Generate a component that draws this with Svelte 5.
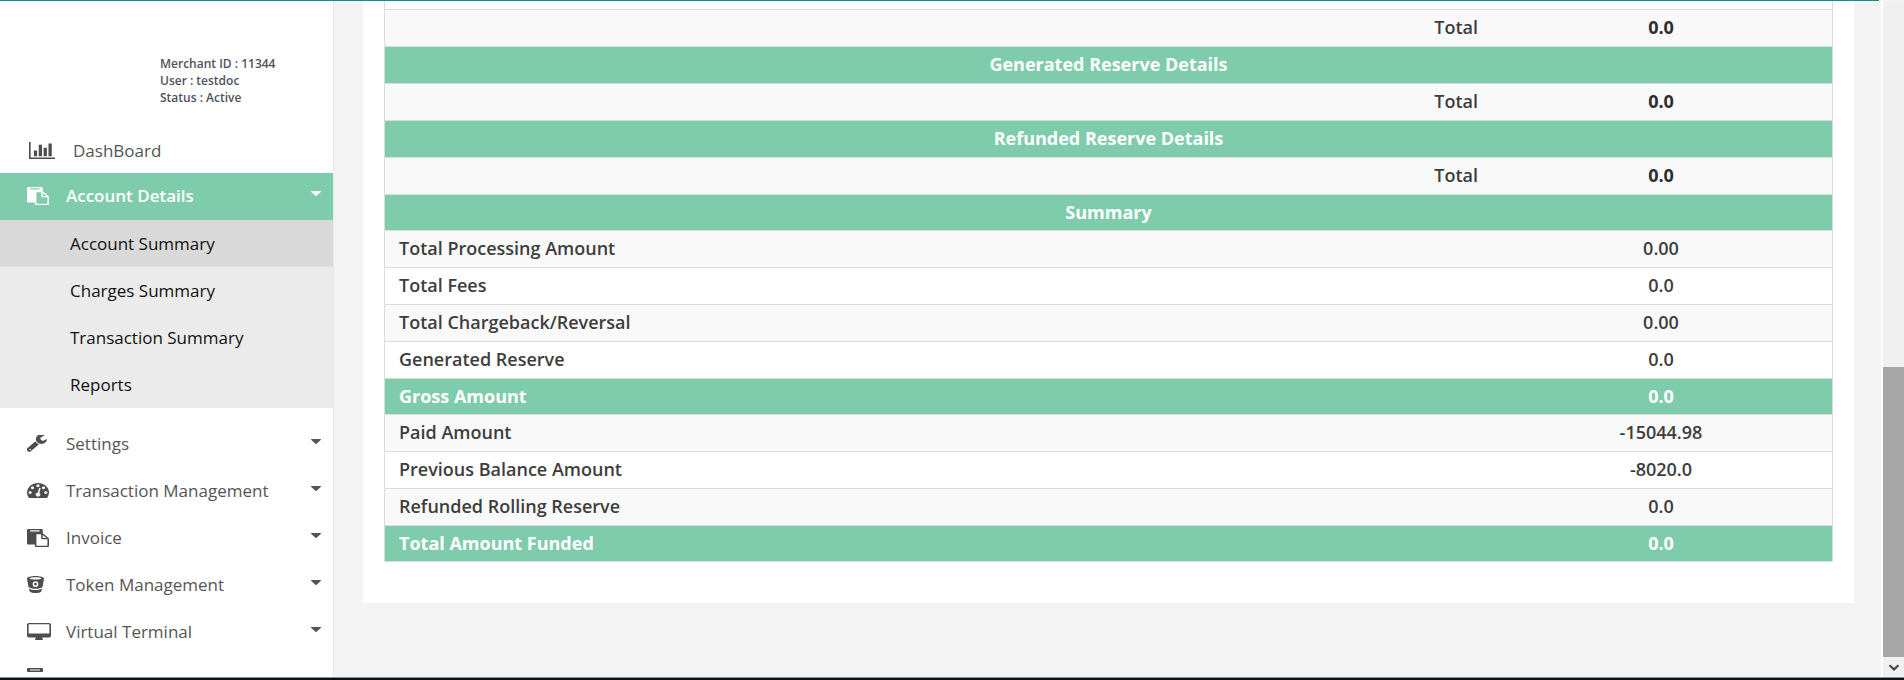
<script>
  const sections = ['Generated Reserve Details', 'Refunded Reserve Details'];

  const summary = [
    { label: 'Total Processing Amount', value: '0.00' },
    { label: 'Total Fees', value: '0.0' },
    { label: 'Total Chargeback/Reversal', value: '0.00' },
    { label: 'Generated Reserve', value: '0.0' },
    { label: 'Gross Amount', value: '0.0', accent: true },
    { label: 'Paid Amount', value: '-15044.98' },
    { label: 'Previous Balance Amount', value: '-8020.0' },
    { label: 'Refunded Rolling Reserve', value: '0.0' },
    { label: 'Total Amount Funded', value: '0.0', accent: true }
  ];

  const subItems = ['Account Summary', 'Charges Summary', 'Transaction Summary', 'Reports'];

  const menu = [
    { label: 'Settings', icon: 'wrench' },
    { label: 'Transaction Management', icon: 'gauge' },
    { label: 'Invoice', icon: 'paste' },
    { label: 'Token Management', icon: 'bucket' },
    { label: 'Virtual Terminal', icon: 'desktop' }
  ];

  const icons = {
    chart: {
      w: 26, h: 17, box: '0 128 2048 1536',
      d: 'M640 896v512h-256v-512h256zM1024 384v1024h-256v-1024h256zM2048 1536v128h-2048v-1536h128v1408h1920zM1408 640v768h-256v-768h256zM1792 256v1152h-256v-1152h256z'
    },
    paste: {
      w: 22, h: 18, box: '0 0 1792 1792',
      d: 'M768 1664h896v-640h-416q-40 0-68-28t-28-68v-416h-384v1152zM1024 224v-64q0-13-9.5-22.5t-22.5-9.5h-704q-13 0-22.5 9.5t-9.5 22.5v64q0 13 9.5 22.5t22.5 9.5h704q13 0 22.5-9.5t9.5-22.5zM1280 896h299l-299-299v299zM1792 1024v672q0 40-28 68t-68 28h-960q-40 0-68-28t-28-68v-160h-544q-40 0-68-28t-28-68v-1344q0-40 28-68t68-28h1088q40 0 68 28t28 68v328q21 13 36 28l408 408q28 28 48 76t20 88z'
    },
    wrench: {
      w: 20, h: 17, box: '128 128 1600 1580',
      d: 'M448 1472q0-26-19-45t-45-19-45 19-19 45 19 45 45 19 45-19 19-45zM1092 988l-682 682q-37 37-90 37-52 0-91-37l-106-108q-38-36-38-90 0-53 38-91l681-681q39 98 114.5 173.5t173.5 114.5zM1726 553q0 39-23 106-47 134-164.5 217.5t-258.5 83.5q-185 0-316.5-131.5t-131.5-316.5 131.5-316.5 316.5-131.5q58 0 121.5 16.5t107.5 46.5q16 11 16 28t-16 28l-293 169v224l193 107q5-3 79-48.5t135.5-81 70.5-35.5q15 0 23.5 10t8.5 25z'
    },
    gauge: {
      w: 22, h: 15, box: '0 256 1792 1408',
      d: 'M384 1152q0-53-37.5-90.5t-90.5-37.5-90.5 37.5-37.5 90.5 37.5 90.5 90.5 37.5 90.5-37.5 37.5-90.5zM576 704q0-53-37.5-90.5t-90.5-37.5-90.5 37.5-37.5 90.5 37.5 90.5 90.5 37.5 90.5-37.5 37.5-90.5zM1004 1185l101-382q6-26-7.5-48.5t-38.5-29.5-48 6.5-30 39.5l-101 382q-60 5-107 43.5t-63 98.5q-20 77 20 146t117 89 146-20 89-117q16-60-6-117t-72-91zM1664 1152q0-53-37.5-90.5t-90.5-37.5-90.5 37.5-37.5 90.5 37.5 90.5 90.5 37.5 90.5-37.5 37.5-90.5zM1024 512q0-53-37.5-90.5t-90.5-37.5-90.5 37.5-37.5 90.5 37.5 90.5 90.5 37.5 90.5-37.5 37.5-90.5zM1472 704q0-53-37.5-90.5t-90.5-37.5-90.5 37.5-37.5 90.5 37.5 90.5 90.5 37.5 90.5-37.5 37.5-90.5zM1792 1152q0 261-141 483-19 29-54 29h-1402q-35 0-54-29-141-221-141-483 0-182 71-348t191-286 286-191 348-71 348 71 286 191 191 286 71 348z'
    },
    bucket: {
      w: 17, h: 17, box: '0 0 17 17',
      d: 'M8.500 0C13 0 17 1 17 2.600L15.600 10.800C14 12.300 11.500 12.800 8.500 12.800S3 12.300 1.400 10.800L0 2.600C0 1 4 0 8.500 0zM8.500 1.300C5.500 1.300 3 1.700 2.300 2.400C3 3 5.500 3.400 8.500 3.400S14 3 14.700 2.400C14 1.700 11.500 1.300 8.500 1.300zM8.500 5.200A2.900 2.900 0 1 0 8.500 11A2.900 2.900 0 1 0 8.500 5.200zM8.500 6.700A1.400 1.400 0 1 1 8.500 9.500A1.400 1.400 0 1 1 8.500 6.700zM2 12.500C4 13.700 6 14 8.500 14S13 13.700 15 12.500L14.300 15.500C13 16.600 11 17 8.500 17S4 16.600 2.700 15.500z'
    },
    desktop: {
      w: 24, h: 17, box: '0 0 1920 1664',
      d: 'M1792 992v-832q0-13-9.500-22.500t-22.500-9.500h-1600q-13 0-22.500 9.500t-9.500 22.500v832q0 13 9.500 22.500t22.500 9.500h1600q13 0 22.500-9.500t9.500-22.500zM1920 160v1088q0 66-47 113t-113 47h-544q0 37 16 77.500t32 71 16 43.500q0 26-19 45t-45 19h-512q-26 0-45-19t-19-45q0-14 16-44t32-70 16-78h-544q-66 0-113-47t-47-113v-1088q0-66 47-113t113-47h1600q66 0 113 47t47 113z'
    },
    drawer: {
      w: 16, h: 22, box: '0 0 16 22',
      d: 'M1 0H15Q16 0 16 1V3Q16 4 15 4H1Q0 4 0 3V1Q0 0 1 0zM3 1.500V2.500H13V1.500zM1 11H15Q16 11 16 12V21Q16 22 15 22H1Q0 22 0 21V12Q0 11 1 11z'
    }
  };
</script>

{#snippet glyph(name)}
  {@const i = icons[name]}
  <svg width={i.w} height={i.h} viewBox={i.box} preserveAspectRatio="none" aria-hidden="true">
    <path fill="currentColor" fill-rule="evenodd" d={i.d} />
  </svg>
{/snippet}

{#snippet caret()}
  <svg class="caret" width="10" height="5" viewBox="0 0 10 5" aria-hidden="true">
    <path fill="currentColor" d="M0.500 0H9.500Q10.300 0.200 9.700 0.900L5.600 4.700Q5 5.200 4.400 4.700L0.300 0.900Q-0.300 0.200 0.500 0z" />
  </svg>
{/snippet}

<div class="shell">
  <div class="topline"></div>
  <div class="body">
    <aside class="sidebar">
      <div class="user">
        <div>Merchant ID : 11344</div>
        <div>User : testdoc</div>
        <div>Status : Active</div>
      </div>
      <nav>
        <a class="item dash" href="#dashboard"><span class="icon">{@render glyph('chart')}</span>DashBoard</a>
        <button class="item open" type="button" aria-expanded="true">
          <span class="icon">{@render glyph('paste')}</span>Account Details{@render caret()}
        </button>
        <ul class="sub">
          {#each subItems as s, n}
            <li><a class:current={n === 0} href="#account">{s}</a></li>
          {/each}
        </ul>
        {#each menu as m}
          <button class="item" type="button" aria-expanded="false">
            <span class="icon">{@render glyph(m.icon)}</span>{m.label}{@render caret()}
          </button>
        {/each}
        <div class="item"><span class="icon">{@render glyph('drawer')}</span></div>
      </nav>
    </aside>

    <main>
      <section class="panel">
        <table>
          <colgroup><col /><col class="amount" /></colgroup>
          <tbody>
            <tr class="spacer"><td colspan="2"></td></tr>
            <tr class="total"><td>Total</td><td>0.0</td></tr>
            {#each sections as s}
              <tr class="accent head"><th colspan="2">{s}</th></tr>
              <tr class="total"><td>Total</td><td>0.0</td></tr>
            {/each}
          </tbody>
          <tbody class="summary">
            <tr class="accent head"><th colspan="2">Summary</th></tr>
            {#each summary as r, n}
              <tr class:accent={r.accent} class:shaded={!r.accent && (n % 2 === 0 || n === 5 || n === 7)} class:plain={n === 6}>
                <td>{r.label}</td><td>{r.value}</td>
              </tr>
            {/each}
          </tbody>
        </table>
      </section>
    </main>

    <div class="scroll">
      <div class="thumb"></div>
      <svg width="10" height="7" viewBox="0 0 10 7" aria-hidden="true">
        <path d="M0.500 1.200L5 5.400L9.500 1.200" fill="none" stroke="#4a4a4a" stroke-width="2.200" />
      </svg>
    </div>
  </div>
  <div class="taskbar"></div>
</div>

<style>
  :global(body) {
    margin: 0;
  }
  .shell {
    display: flex;
    flex-direction: column;
    height: 100vh;
    overflow: hidden;
    background: #f3f3f3;
    font-family: 'Open Sans', sans-serif;
    color: #3d3d3d;
  }
  .topline {
    flex: none;
    height: 1px;
    margin-right: 25px;
    background: #168a94;
  }
  .taskbar {
    flex: none;
    height: 2px;
    border-top: 1px solid #8c8c8c;
    background: #0d1114;
  }
  .body {
    display: flex;
    flex: 1;
    min-height: 0;
  }

  .sidebar {
    flex: none;
    width: 333px;
    overflow: hidden;
    background: #fff;
    border-right: 1px solid #e8e8e8;
  }
  .user {
    padding: 54px 0 28px 160px;
    font-size: 12px;
    font-weight: 600;
    line-height: 17px;
    color: #4e535c;
  }
  .item {
    display: flex;
    align-items: center;
    box-sizing: border-box;
    width: 100%;
    height: 47px;
    padding: 0 12px 0 27px;
    border: 0;
    background: none;
    font: 400 17px/24px 'Open Sans', sans-serif;
    color: #555;
    text-align: left;
    text-decoration: none;
  }
  .icon {
    display: flex;
    flex: none;
    width: 39px;
    color: #4d4d4d;
  }
  .dash {
    height: 39px;
    padding-bottom: 6px;
    padding-left: 29px;
  }
  .dash .icon {
    width: 44px;
  }
  .open,
  .open .icon {
    color: #fff;
  }
  .open {
    padding-bottom: 2px;
    background: #7fccad;
    font-weight: 600;
  }
  .caret {
    margin: 0 0 4px auto;
  }
  .sub {
    margin: 0 0 12px;
    padding: 0;
    list-style: none;
    background: #ebebeb;
  }
  .sub a {
    display: block;
    padding-left: 70px;
    font-size: 17px;
    line-height: 47px;
    color: #111;
    text-decoration: none;
  }
  .sub a.current {
    background: #d9d9d9;
  }

  main {
    flex: 1;
    min-width: 0;
    padding: 0 27px 0 29px;
    border-right: 2px solid #fff;
  }
  .panel {
    padding: 0 21px 41px;
    background: #fff;
  }
  table {
    width: 100%;
    table-layout: fixed;
    border-collapse: separate;
    border-spacing: 0;
    border: 1px solid #dcdcdc;
    border-top: 0;
    font-size: 18px;
    font-weight: 600;
    line-height: 20px;
  }
  .amount {
    width: 342px;
  }
  td,
  th {
    padding: 7px 12px 9px;
    border-top: 1px solid #dcdcdc;
    text-align: left;
  }
  td:first-child {
    padding-left: 14px;
  }
  td:last-child,
  .head th {
    text-align: center;
  }
  .spacer td {
    height: 8px;
    padding: 0;
    border: 0;
  }
  .total td,
  .shaded td {
    background: #f9f9f9;
  }
  .plain td {
    background: #fff;
  }
  .total td:first-child {
    text-align: right;
  }
  .total td:last-child {
    font-weight: 700;
    color: #2e2e2e;
  }
  .accent td,
  .accent th {
    background: #7fccad;
    color: #fff;
    font-weight: 700;
  }
  .summary .accent td,
  .summary .accent th {
    padding-bottom: 8px;
  }

  .scroll {
    display: flex;
    flex: none;
    flex-direction: column;
    align-items: center;
    justify-content: flex-end;
    gap: 7px;
    width: 21px;
    padding-bottom: 6px;
    background: #f0f0f0;
  }
  .thumb {
    width: 100%;
    height: calc(43% + 2px);
    background: #a6a6a6;
  }
</style>
